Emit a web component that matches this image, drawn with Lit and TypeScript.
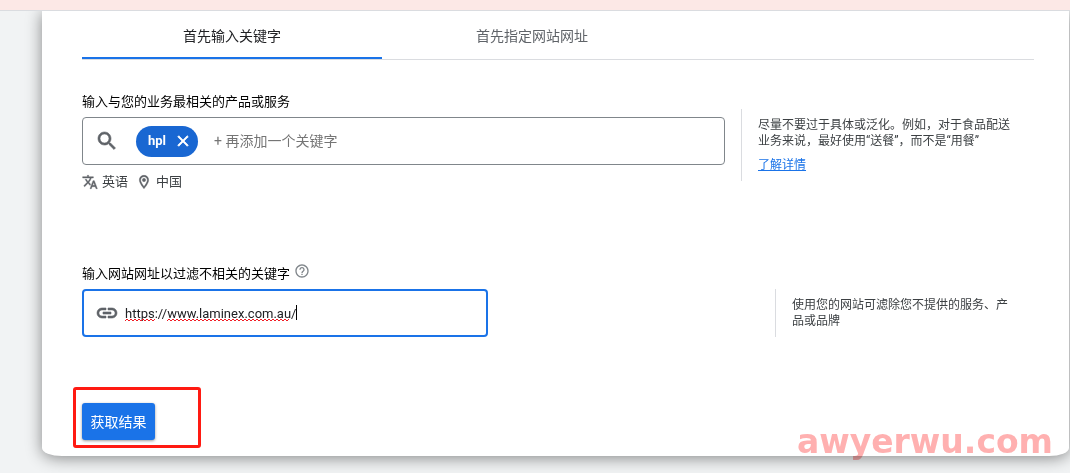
import { LitElement, html, css, svg } from "lit";
import { customElement, state } from "lit/decorators.js";
import { classMap } from "lit/directives/class-map.js";

const PATHS = {
  search:
    "M15.5 14h-.79l-.28-.27C15.41 12.59 16 11.11 16 9.5 16 5.91 13.09 3 9.5 3S3 5.91 3 9.5 5.91 16 9.5 16c1.61 0 3.09-.59 4.23-1.57l.27.28v.79l5 4.99L20.49 19l-4.99-5zm-6 0C7.01 14 5 11.99 5 9.5S7.01 5 9.5 5 14 7.01 14 9.5 11.99 14 9.5 14z",
  close:
    "M19 6.41L17.59 5 12 10.59 6.41 5 5 6.41 10.59 12 5 17.59 6.41 19 12 13.41 17.59 19 19 17.59 13.41 12z",
  translate:
    "M12.87 15.07l-2.54-2.51.03-.03c1.74-1.94 2.98-4.17 3.71-6.53H17V4h-7V2H8v2H1v1.99h11.17C11.5 7.92 10.44 9.75 9 11.35 8.07 10.32 7.3 9.19 6.69 8h-2c.73 1.63 1.73 3.17 2.98 4.56l-5.09 5.02L4 19l5-5 3.11 3.11.76-2.04zM18.5 10h-2L12 22h2l1.12-3h4.75L21 22h2l-4.5-12zm-2.62 7l1.62-4.33L19.12 17h-3.24z",
  place:
    "M12 2C8.13 2 5 5.13 5 9c0 5.25 7 13 7 13s7-7.75 7-13c0-3.87-3.13-7-7-7zM7 9c0-2.76 2.24-5 5-5s5 2.24 5 5c0 2.88-2.88 7.19-5 9.88C9.92 16.21 7 11.85 7 9zM12 6.5a2.5 2.5 0 1 0 0 5 2.5 2.5 0 0 0 0-5z",
  help:
    "M11 18h2v-2h-2v2zm1-16C6.48 2 2 6.48 2 12s4.48 10 10 10 10-4.48 10-10S17.52 2 12 2zm0 18c-4.41 0-8-3.59-8-8s3.59-8 8-8 8 3.59 8 8-3.59 8-8 8zm0-14c-2.21 0-4 1.79-4 4h2c0-1.1.9-2 2-2s2 .9 2 2c0 2-3 1.75-3 5h2c0-2.25 3-2.5 3-5 0-2.21-1.79-4-4-4z",
  link:
    "M3.9 12c0-1.71 1.39-3.1 3.1-3.1h4V7H7c-2.76 0-5 2.24-5 5s2.24 5 5 5h4v-1.9H7c-1.71 0-3.1-1.39-3.1-3.1zM8 13h8v-2H8v2zm9-6h-4v1.9h4c1.71 0 3.1 1.39 3.1 3.1s-1.39 3.1-3.1 3.1h-4V17h4c2.76 0 5-2.24 5-5s-2.24-5-5-5z",
};

const icon = (name: keyof typeof PATHS, size: number) => html`
  <svg class="icon" width=${size} height=${size} viewBox="0 0 24 24" aria-hidden="true">
    ${svg`<path d=${PATHS[name]}></path>`}
  </svg>
`;

@customElement("app-root")
export class AppRoot extends LitElement {
  @state() private tab = 0;
  @state() private keywords = ["hpl"];

  private tabs = ["首先输入关键字", "首先指定网站网址"];

  static styles = css`
    :host {
      display: block;
      min-height: 100vh;
      overflow: hidden;
      background: #f1f3f4;
      color: #202124;
      font-family: Roboto, "Noto Sans CJK SC", sans-serif;
      font-size: 13px;
      line-height: 16px;
    }
    * {
      box-sizing: border-box;
    }
    button,
    input {
      font: inherit;
      border: 0;
      padding: 0;
      margin: 0;
      background: none;
      color: inherit;
    }
    .icon {
      display: block;
      flex: none;
      fill: currentColor;
    }
    .banner {
      position: relative;
      height: 11px;
      background: #fce8e6;
      border-bottom: 1px solid #dadce0;
      z-index: 1;
    }
    .card {
      position: relative;
      margin: 0 1px 0 42px;
      padding: 0 35px 16px 40px;
      background: #fff;
      border-radius: 0 0 20px 20px / 0 0 8px 8px;
      box-shadow: 0 2px 16px rgba(0, 0, 0, 0.45);
    }
    .tabs {
      display: flex;
      height: 49px;
      border-bottom: 1px solid #dadce0;
    }
    .tab {
      width: 300px;
      padding-top: 4px;
      font-size: 14px;
      color: #5f6368;
      border-bottom: 2px solid transparent;
      cursor: pointer;
    }
    .tab.active {
      color: #202124;
      border-color: #1a73e8;
    }
    .row {
      display: grid;
      align-items: start;
    }
    .keywords {
      grid-template-columns: 1fr 293px;
      column-gap: 16px;
      padding-top: 34px;
    }
    .site {
      grid-template-columns: minmax(0, 406px) 259px;
      justify-content: space-between;
      padding-top: 76px;
    }
    .caption {
      display: flex;
      align-items: center;
      gap: 4px;
      height: 16px;
      margin-bottom: 7px;
      color: #000;
      white-space: nowrap;
    }
    .caption .icon {
      color: #80868b;
      margin-bottom: 6px;
    }
    .field {
      display: flex;
      align-items: center;
      height: 48px;
      border: 1px solid #80868b;
      border-radius: 4px;
      padding: 0 12px;
      color: #5f6368;
    }
    .field > .icon,
    .meta .icon {
      stroke: currentColor;
      stroke-width: 0.6;
    }
    .field.focused {
      border: 2px solid #1a73e8;
      padding: 0 11px;
    }
    .chip {
      display: flex;
      align-items: center;
      gap: 8px;
      height: 31px;
      margin: 0 16px 0 17px;
      padding: 0 6px 0 12px;
      border-radius: 16px;
      background: #1967d2;
      color: #fff;
      font-weight: 700;
    }
    .chip button {
      cursor: pointer;
    }
    .chip .icon {
      stroke: currentColor;
      stroke-width: 1;
    }
    input {
      flex: 1;
      min-width: 0;
      width: 100%;
      height: 32px;
      outline: none;
      color: #202124;
    }
    .add {
      font-size: 14px;
    }
    .add::placeholder {
      color: #757575;
      opacity: 1;
    }
    .url {
      position: relative;
      flex: 1;
      margin-left: 6px;
    }
    .spelling {
      position: absolute;
      left: 0;
      top: 0;
      pointer-events: none;
    }
    .meta {
      display: flex;
      align-items: center;
      gap: 8px;
      margin-top: 9px;
      color: #3c4043;
    }
    .meta span {
      display: flex;
      align-items: center;
      gap: 4px;
    }
    .meta .icon {
      color: #5f6368;
    }
    .tip {
      border-left: 1px solid #dadce0;
      padding: 8px 16px;
      color: #3c4043;
      font-size: 12px;
    }
    .tip p {
      margin: 0;
    }
    .tip a {
      display: block;
      margin-top: 8px;
      color: #1a73e8;
      text-decoration: underline;
    }
    .keywords .tip {
      margin-top: 15px;
    }
    .site .tip {
      margin-top: 23px;
      padding-right: 24px;
    }
    .actions {
      display: flex;
      padding-top: 66px;
    }
    .submit-area {
      position: relative;
    }
    .submit {
      display: block;
      height: 37px;
      min-width: 73px;
      padding: 0 8px;
      border-radius: 3px;
      background: #1a73e8;
      color: #fff;
      font-size: 14px;
      box-shadow: 0 1px 3px rgba(0, 0, 0, 0.4);
      cursor: pointer;
    }
    .marker {
      position: absolute;
      left: -9px;
      top: -16px;
      width: 128px;
      height: 61px;
      border: 3px solid #ff1a12;
      border-radius: 3px;
      pointer-events: none;
    }
    .watermark {
      position: absolute;
      right: 16px;
      bottom: -6px;
      font-family: "DejaVu Sans", sans-serif;
      font-weight: 700;
      font-size: 33px;
      line-height: 40px;
      color: #ffb0b0;
      mix-blend-mode: multiply;
      pointer-events: none;
    }
  `;

  private squiggle(from: number, to: number) {
    let d = `M${from} 24`;
    for (let x = from + 2, up = true; x <= to; x += 2, up = !up) {
      d += `L${x} ${up ? 22 : 24}`;
    }
    return svg`<path d=${d} fill="none" stroke="#f01c24" stroke-width="1"></path>`;
  }

  render() {
    return html`
      <div class="banner"></div>
      <main class="card">
        <div class="tabs" role="tablist">
          ${this.tabs.map(
            (t, i) => html`<button
              role="tab"
              aria-selected=${i === this.tab}
              class=${classMap({ tab: true, active: i === this.tab })}
              @click=${() => (this.tab = i)}
            >${t}</button>`
          )}
        </div>

        <section class="row keywords">
          <div>
            <label class="caption" for="keyword">输入与您的业务最相关的产品或服务</label>
            <div class="field">
              ${icon("search", 24)}
              ${this.keywords.map(
                (k) => html`<span class="chip">${k}<button
                  aria-label="移除"
                  @click=${() => (this.keywords = this.keywords.filter((x) => x !== k))}
                >${icon("close", 18)}</button></span>`
              )}
              <input id="keyword" class="add" type="text" placeholder="+ 再添加一个关键字" />
            </div>
            <div class="meta">
              <span>${icon("translate", 16)}英语</span>
              <span>${icon("place", 16)}中国</span>
            </div>
          </div>
          <aside class="tip">
            <p>尽量不要过于具体或泛化。例如，对于食品配送业务来说，最好使用“送餐”，而不是“用餐”</p>
            <a href="#">了解详情</a>
          </aside>
        </section>

        <section class="row site">
          <div>
            <label class="caption" for="site">输入网站网址以过滤不相关的关键字${icon("help", 16)}</label>
            <div class="field focused">
              ${icon("link", 24)}
              <div class="url">
                <input id="site" type="text" spellcheck="false" value="https://www.laminex.com.au/" />
                <svg class="spelling" width="180" height="32" aria-hidden="true">
                  ${this.squiggle(0, 30)} ${this.squiggle(42, 165)}
                  <rect x="171" y="8" width="1" height="15" fill="#000"></rect>
                </svg>
              </div>
            </div>
          </div>
          <aside class="tip">
            <p>使用您的网站可滤除您不提供的服务、产品或品牌</p>
          </aside>
        </section>

        <div class="actions">
          <div class="submit-area">
            <button class="submit">获取结果</button>
            <div class="marker"></div>
          </div>
        </div>
        <div class="watermark">awyerwu.com</div>
      </main>
    `;
  }
}
